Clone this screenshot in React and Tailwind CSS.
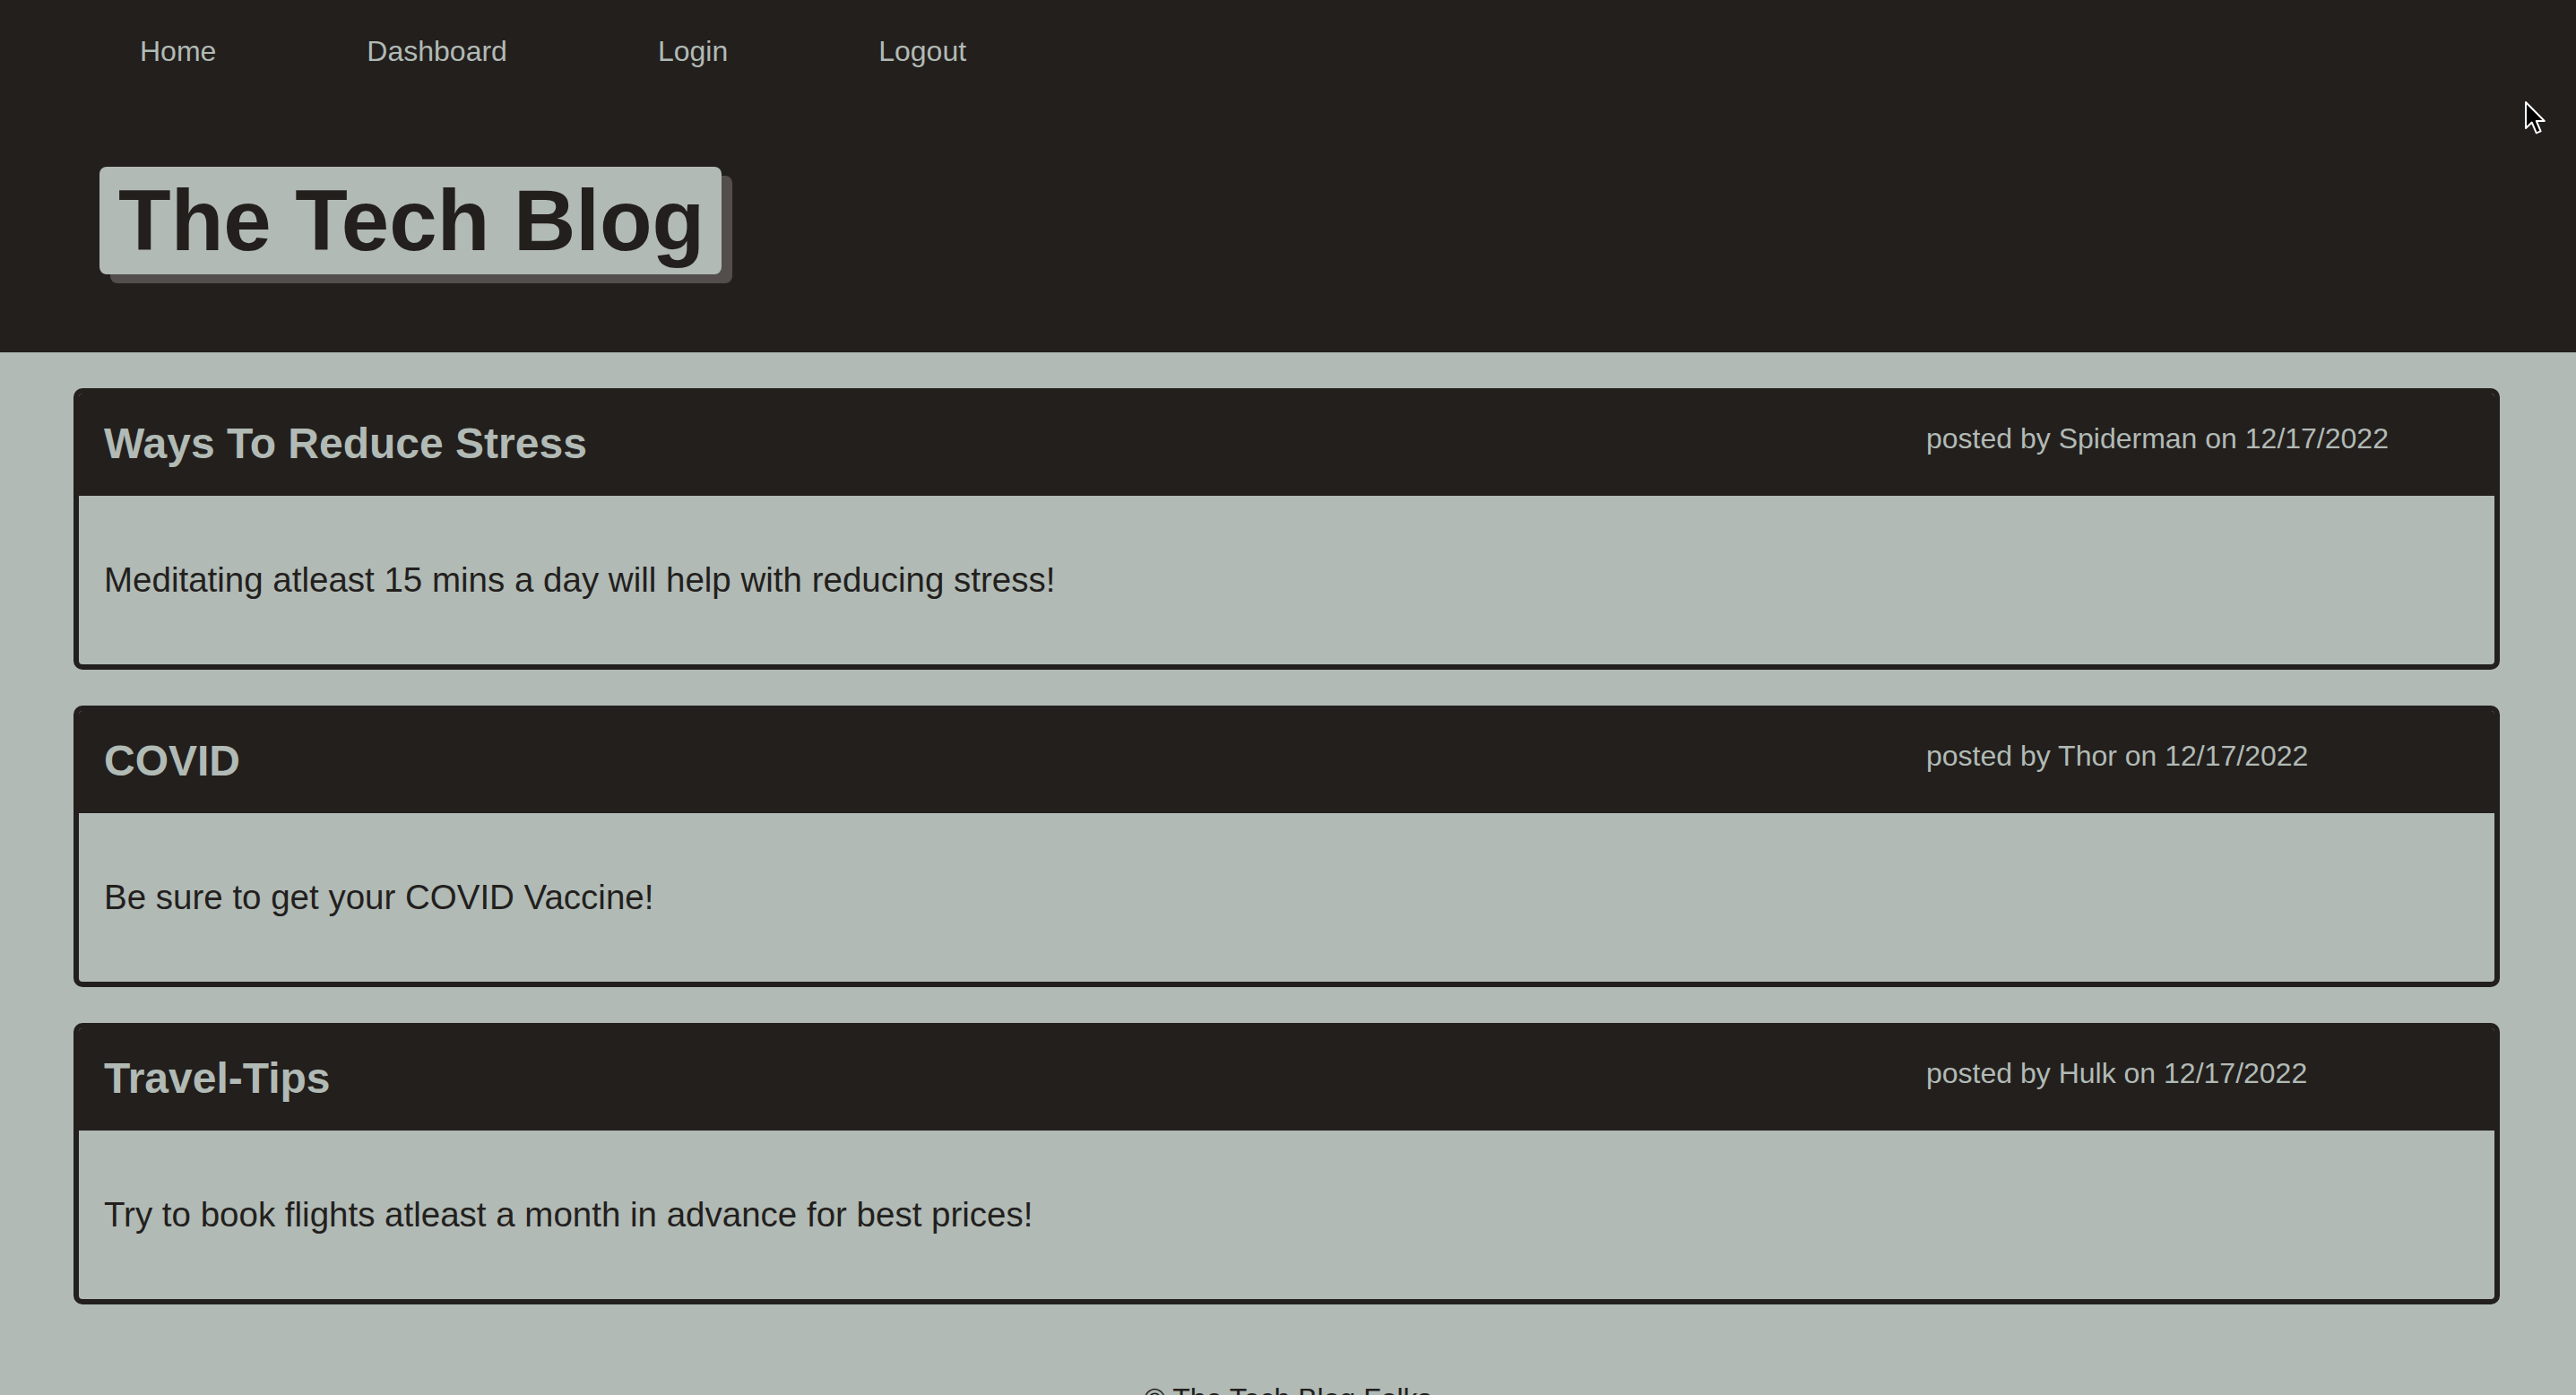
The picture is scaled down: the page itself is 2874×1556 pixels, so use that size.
const posts = [
  {
    id: 1,
    title: "Ways To Reduce Stress",
    author: "Spiderman",
    date: "12/17/2022",
    body: "Meditating atleast 15 mins a day will help with reducing stress!",
  },
  {
    id: 2,
    title: "COVID",
    author: "Thor",
    date: "12/17/2022",
    body: "Be sure to get your COVID Vaccine!",
  },
  {
    id: 3,
    title: "Travel-Tips",
    author: "Hulk",
    date: "12/17/2022",
    body: "Try to book flights atleast a month in advance for best prices!",
  },
];

function Cursor() {
  return (
    <svg
      className="absolute left-[2816px] top-[112px]"
      width="26"
      height="40"
      viewBox="0 0 13 20"
    >
      <path
        d="M1 1 L1 15.5 L4.4 12.3 L6.9 18.2 L9.3 17.2 L6.9 11.5 L11.4 11.5 Z"
        fill="#000"
        stroke="#fff"
        strokeWidth="1"
        strokeLinejoin="round"
      />
    </svg>
  );
}

export default function App() {
  return (
    <div className="relative min-h-screen bg-[#b1bab5] font-['Liberation_Sans',Arial,sans-serif] text-[#231f1d]">
      <header className="h-[393px] bg-[#231f1d]">
        <nav className="flex gap-[168px] pl-[156px] pt-[33px] text-[32px] leading-[48px] text-[#b1bab5]">
          <a href="#">Home</a>
          <a href="#">Dashboard</a>
          <a href="#">Login</a>
          <a href="#">Logout</a>
        </nav>

        <div className="mt-[105px] pl-[111px]">
          <h1 className="inline-block rounded-lg bg-[#b1bab5] py-3 pl-[21px] pr-[19px] text-[96px] font-bold leading-none text-[#231f1d] shadow-[12px_10px_0_0_#534e4c]">
            The Tech Blog
          </h1>
        </div>
      </header>

      <main className="flex flex-col gap-10 pl-[82px] pr-[85px] pt-10">
        {posts.map((post) => (
          <article
            key={post.id}
            className="overflow-hidden rounded-[10px] border-[6px] border-[#231f1d]"
          >
            <div className="flex h-[114px] items-start bg-[#231f1d] pl-7 pt-[32px] text-[#b1bab5]">
              <h2 className="flex-1 text-[48px] font-bold leading-none">
                {post.title}
              </h2>
              <p className="mt-[2px] w-[634px] shrink-0 text-[32px] leading-none">
                posted by {post.author} on {post.date}
              </p>
            </div>
            <div className="px-7 py-[70px] text-[38.5px] leading-[48px]">
              {post.body}
            </div>
          </article>
        ))}
      </main>

      <footer className="mt-[81px] pb-10 text-center text-[32px] leading-[48px]">
        © The Tech Blog Folks
      </footer>

      <Cursor />
    </div>
  );
}
